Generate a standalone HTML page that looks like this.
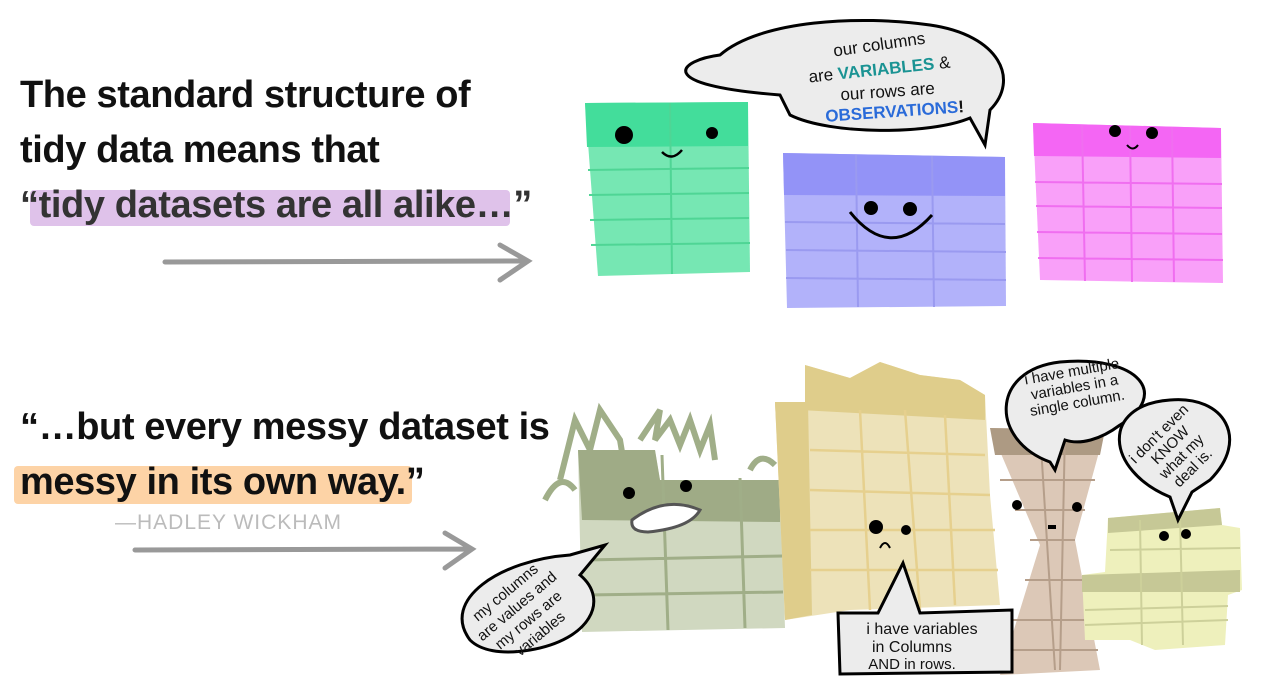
<!DOCTYPE html>
<html><head><meta charset="utf-8"><style>
html,body{margin:0;padding:0;background:#fff;width:1264px;height:695px;overflow:hidden}
.t{position:absolute;left:20px;font-family:"Liberation Sans",sans-serif;font-size:38px;font-weight:bold;color:#111;letter-spacing:-0.4px;white-space:nowrap}
</style></head><body>
<div style="position:absolute;left:30px;top:190px;width:480px;height:36px;background:#dfc2ea;border-radius:4px"></div>
<div style="position:absolute;left:14px;top:466px;width:398px;height:38px;background:#fdd3a6;border-radius:4px"></div>
<div class="t" style="top:74px">The standard structure of</div>
<div class="t" style="top:129px">tidy data means that</div>
<div class="t" style="top:184px;color:#333">“tidy datasets are all alike…”</div>
<div class="t" style="top:406px">“…but every messy dataset is</div>
<div class="t" style="top:461px">messy in its own way.”</div>
<div style="position:absolute;left:115px;top:511px;font-family:'Liberation Sans',sans-serif;font-size:21px;color:#bbb;letter-spacing:1px">—HADLEY WICKHAM</div>
<svg width="1264" height="695" style="position:absolute;left:0;top:0" font-family="Liberation Sans, sans-serif">
<g stroke="#999" stroke-width="5" fill="none" stroke-linecap="round"><path d="M165 262 L525 261 M500 245 L528 261 L500 280"/><path d="M135 550 L470 549 M445 533 L472 549 L445 568"/></g>
<polygon points="585,103 748,102 750,272 598,276" fill="#76e7b3"/>
<polygon points="585,103 748,102 748,146 587,147" fill="#43dd9b"/>
<g stroke="#4fd595" stroke-width="2" fill="none"><path d="M588 170 L749 168 M589 195 L749 193 M590 220 L749 218 M591 245 L750 243 M670 103 L672 274"/></g>
<circle cx="624" cy="135" r="9"/><circle cx="712" cy="133" r="6"/><path d="M662 152 Q672 162 682 150" stroke="#000" stroke-width="2.5" fill="none"/>
<polygon points="783,153 1005,157 1006,306 787,308" fill="#b2b2fa"/>
<polygon points="783,153 1005,157 1005,196 784,195" fill="#9393f7"/>
<g stroke="#9a9af0" stroke-width="2" fill="none"><path d="M785 222 L1005 224 M786 250 L1006 252 M786 278 L1006 280 M856 155 L858 307 M932 156 L934 307"/></g>
<circle cx="871" cy="208" r="7"/><circle cx="910" cy="209" r="7"/><path d="M850 212 Q890 262 932 215" stroke="#000" stroke-width="3" fill="none"/>
<polygon points="1033,123 1221,128 1223,283 1040,280" fill="#f9a0f9"/>
<polygon points="1033,123 1221,128 1221,158 1034,156" fill="#f466f4"/>
<g stroke="#f06ef0" stroke-width="2" fill="none"><path d="M1035 182 L1222 184 M1036 206 L1222 208 M1037 232 L1222 234 M1038 258 L1223 260 M1082 125 L1085 281 M1130 126 L1132 282 M1172 127 L1174 282"/></g>
<circle cx="1115" cy="131" r="6"/><circle cx="1152" cy="133" r="6"/><path d="M1127 145 Q1133 152 1138 145" stroke="#000" stroke-width="2" fill="none"/>
<path d="M780 95 C 650 85, 680 60, 720 55 C 760 20, 860 15, 930 25 C 1000 35, 1020 80, 990 110 L 985 145 L 970 118 C 930 135, 830 135, 790 115 Z" fill="#ececec" stroke="#000" stroke-width="3"/>
<g font-size="17" text-anchor="middle" fill="#111"><text x="880" y="50" transform="rotate(-8 880 50)">our columns</text><text x="880" y="75" transform="rotate(-6 880 75)">are <tspan fill="#1a9393" font-weight="bold">VARIABLES</tspan> &amp;</text><text x="888" y="97" transform="rotate(-4 888 97)">our rows are</text><text x="895" y="117" transform="rotate(-4 895 117)" fill="#2a6bd9" font-weight="bold">OBSERVATIONS<tspan fill="#111">!</tspan></text></g>
<g stroke="#a0ae88" stroke-width="6" fill="none"><path d="M560 480 L575 420 L590 450 L600 410 L620 440 L625 470 M640 440 L660 410 L655 440 L670 420 L680 445 L690 420 L700 450 L710 425 L715 460 M545 500 Q560 470 575 490 M750 470 Q760 450 775 465"/></g>
<polygon points="578,450 655,450 660,480 780,480 785,628 582,632" fill="#d0d8c0"/>
<polygon points="578,450 655,450 660,480 780,480 780,522 582,520" fill="#9fab86"/>
<g stroke="#a0ae88" stroke-width="3" fill="none"><path d="M585 560 L783 556 M585 595 L783 592 M662 455 L668 630 M740 478 L745 628"/></g>
<circle cx="629" cy="493" r="6"/><circle cx="686" cy="486" r="6"/>
<path d="M632 520 Q665 495 700 510 Q690 528 648 532 Q630 532 632 520Z" fill="#fff" stroke="#555" stroke-width="3"/>
<polygon points="775,402 805,402 805,365 850,378 880,362 920,375 960,380 985,395 990,495 1000,605 850,610 785,620" fill="#ede2b9"/>
<polygon points="775,402 805,402 805,365 850,378 880,362 920,375 960,380 985,395 985,420 800,410 776,420" fill="#dfcd8b"/>
<polygon points="775,402 808,402 812,615 785,620" fill="#dfcd8b"/>
<g stroke="#e6d08e" stroke-width="2.5" fill="none"><path d="M810 450 L985 455 M810 490 L990 495 M810 530 L995 530 M810 570 L998 570 M860 410 L870 610 M905 410 L920 610 M945 415 L955 605"/></g>
<circle cx="876" cy="527" r="7"/><circle cx="906" cy="530" r="5"/><path d="M880 548 Q885 538 890 548" stroke="#000" stroke-width="2" fill="none"/>
<polygon points="990,428 1105,430 1075,540 1100,670 1000,675 1040,545" fill="#dcc8b7"/>
<polygon points="990,428 1105,430 1100,455 995,455" fill="#ad9a83"/>
<g stroke="#b59e8a" stroke-width="2" fill="none"><path d="M1000 480 L1095 480 M1015 510 L1085 510 M1030 540 L1075 540 M1025 580 L1085 580 M1010 620 L1095 620 M1005 650 L1098 650 M1040 430 L1055 670 M1065 430 L1060 670"/></g>
<circle cx="1017" cy="505" r="5"/><circle cx="1077" cy="507" r="5"/><path d="M1048 527 h8" stroke="#000" stroke-width="4"/>
<polygon points="1108,518 1220,508 1222,525 1240,528 1242,590 1228,595 1225,645 1155,650 1130,640 1085,640 1082,575 1105,572" fill="#eef0bc"/>
<polygon points="1108,518 1220,508 1222,525 1108,533" fill="#c6c896"/>
<polygon points="1082,575 1240,570 1240,592 1082,592" fill="#c6c896"/>
<g stroke="#cdd09a" stroke-width="2" fill="none"><path d="M1110 550 L1240 548 M1085 610 L1228 606 M1085 625 L1228 620 M1140 520 L1142 645 M1180 515 L1183 645"/></g>
<circle cx="1164" cy="536" r="5"/><circle cx="1186" cy="534" r="5"/>
<g fill="#ececec" stroke="#000" stroke-width="3">
<path d="M470 640 C440 600, 500 560, 570 555 L605 545 L580 575 C610 600, 590 640, 530 650 C500 655, 480 650, 470 640Z"/>
<path d="M838 613 L878 613 L903 563 L920 613 L1012 610 L1012 672 L840 674 Z"/>
<path d="M1050 462 C990 440, 990 370, 1060 362 C1140 355, 1170 395, 1120 425 C1100 440, 1080 445, 1065 440 L1055 470 Z"/>
<path d="M1170 497 C1105 470, 1100 405, 1170 400 C1225 395, 1250 440, 1210 480 L1192 492 L1178 520 Z"/>
</g>
<g font-size="15" fill="#111" text-anchor="middle">
<text transform="translate(520 610) rotate(-40)"><tspan x="0" y="-18">my columns</tspan><tspan x="0" y="0">are values and</tspan><tspan x="0" y="18">my rows are</tspan><tspan x="0" y="36">variables</tspan></text>
<text x="922" y="634" font-size="16">i have variables</text><text x="912" y="652" font-size="16">in Columns</text><text x="912" y="669" font-size="15">AND in rows.</text>
<text transform="translate(1075 390) rotate(-10)"><tspan x="0" y="-14">i have multiple</tspan><tspan x="0" y="2">variables in a</tspan><tspan x="0" y="18">single column.</tspan></text>
<text transform="translate(1175 450) rotate(-45)"><tspan x="0" y="-18">i don't even</tspan><tspan x="0" y="-2">KNOW</tspan><tspan x="0" y="14">what my</tspan><tspan x="0" y="30">deal is.</tspan></text>
</g>
</svg>
</body></html>
